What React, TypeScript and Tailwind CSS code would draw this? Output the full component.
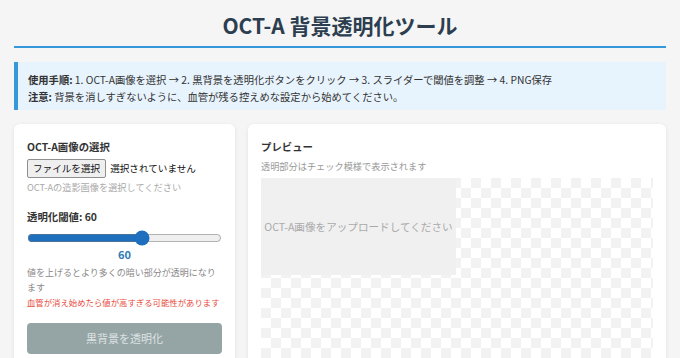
export default function App() {
  return (
    <div className="min-h-screen bg-[#f5f5f5] px-[14px] pt-[12px] font-['Noto_Sans_CJK_JP','Noto_Sans',sans-serif] text-[#333]">
      <h1 className="border-b-2 border-[#3498db] pb-[8px] text-center text-[21px] font-bold leading-[26px] text-[#2c3e50]">
        OCT-A 背景透明化ツール
      </h1>

      <div className="mt-[14px] border-l-4 border-[#3498db] bg-[#e8f4fd] pt-[10px] pb-[5px] pl-[10px] text-[10.3px] leading-[16.5px] text-[#333]">
        <p>
          <strong>使用手順:</strong> 1. OCT-A画像を選択 → 2. 黒背景を透明化ボタンをクリック → 3. スライダーで閾値を調整 → 4. PNG保存
        </p>
        <p>
          <strong>注意:</strong> 背景を消しすぎないように、血管が残る控えめな設定から始めてください。
        </p>
      </div>

      <div className="mt-[14px] grid grid-cols-[221px_1fr] gap-[13px]">
        <div className="rounded-md bg-white px-[13px] pt-[16px] pb-4 shadow-[0_1px_4px_rgba(0,0,0,0.08)]">
          <h3 className="text-[10.4px] font-bold leading-[14px] text-[#333]">OCT-A画像の選択</h3>
          <div className="mt-[5px] flex items-center gap-[4px] text-[9.6px]">
            <span className="rounded-[2px] border border-[#8f8f8f] bg-[#efefef] px-[5px] py-[1px] leading-[15px] text-[#111]">
              ファイルを選択
            </span>
            <span className="text-[#111]">選択されていません</span>
          </div>
          <p className="mt-[2px] text-[9.2px] leading-[14px] text-[#aaa]">OCT-Aの造影画像を選択してください</p>

          <h3 className="mt-[16px] text-[10.4px] font-bold leading-[14px] text-[#333]">透明化閾値: 60</h3>
          <input
            type="range"
            min={0}
            max={100}
            defaultValue={60}
            className="mt-[7px] block h-[14px] w-full accent-[#1f6fbf]"
          />
          <div className="mt-[2px] text-center text-[11px] font-bold leading-[14px] text-[#2f7bb5]">60</div>
          <p className="mt-[4px] text-[9px] leading-[15px] text-[#888]">値を上げるとより多くの暗い部分が透明になります</p>
          <p className="mt-[0px] text-[8.4px] leading-[14px] text-[#e74c3c]">血管が消え始めたら値が高すぎる可能性があります</p>
          <button className="mt-[14px] h-[31px] w-full rounded-[4px] bg-[#95a5a6] text-[11px] text-[#dde3e3]">
            黒背景を透明化
          </button>
        </div>

        <div className="rounded-md bg-white px-[13px] pt-[16px] pb-4 shadow-[0_1px_4px_rgba(0,0,0,0.08)]">
          <h3 className="text-[10.4px] font-bold leading-[14px] text-[#333]">プレビュー</h3>
          <p className="mt-[5px] text-[9.2px] leading-[14px] text-[#999]">透明部分はチェック模様で表示されます</p>
          <div className="mt-[5px] h-[220px] bg-[conic-gradient(#f2f2f2_25%,#ffffff_0_50%,#f2f2f2_0_75%,#ffffff_0)] bg-[length:20px_20px]">
            <div className="flex h-[97px] w-[195px] items-center justify-center whitespace-nowrap bg-[#f0f0f0] text-[10.6px] text-[#aaa]">
              OCT-A画像をアップロードしてください
            </div>
          </div>
        </div>
      </div>
    </div>
  );
}
